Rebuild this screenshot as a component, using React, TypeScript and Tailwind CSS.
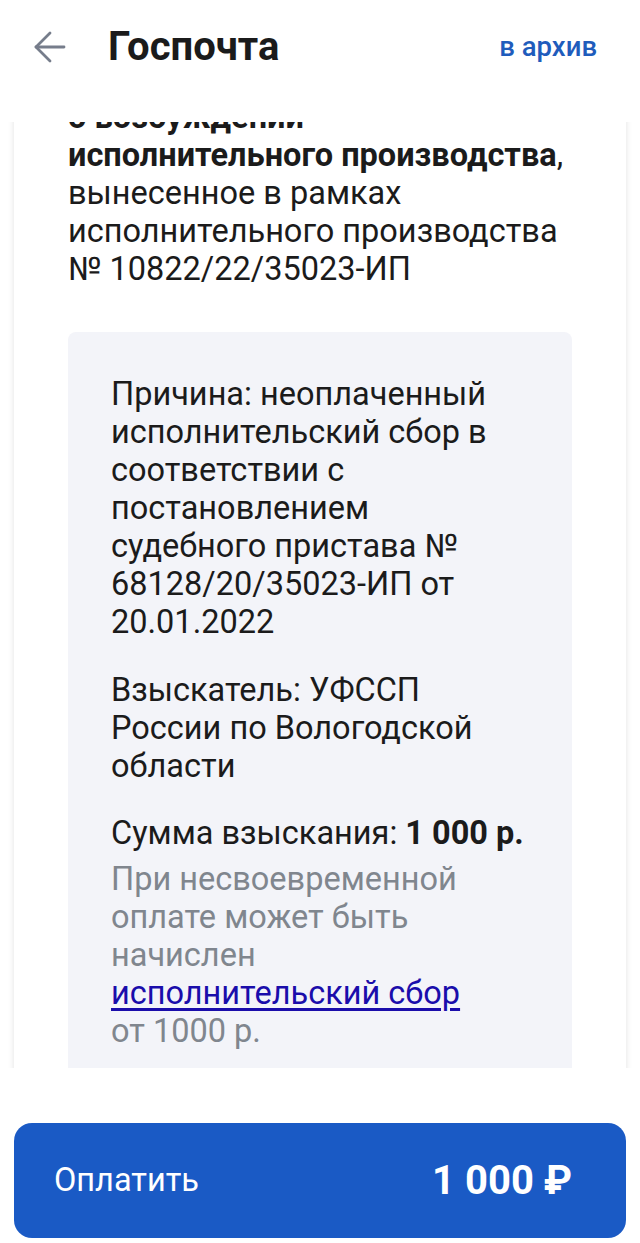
import { ArrowLeft } from 'lucide-react';

export default function App() {
  return (
    <div className="w-[640px] h-[1243px] bg-white flex flex-col overflow-hidden font-['Roboto',sans-serif] text-[#1b1b1b]">
      {/* Header */}
      <div className="h-[94px] flex items-center px-[26px] shrink-0">
        <ArrowLeft className="w-[48px] h-[48px] text-[#767d8b]" strokeWidth={1.4} />
        <h1 className="ml-[34px] text-[40px] font-bold">Госпочта</h1>
        <button className="ml-auto mr-[17px] text-[27.5px] font-medium text-[#1f5cbc]">в архив</button>
      </div>

      {/* Scroll area */}
      <div className="mt-[28px] h-[946px] overflow-hidden px-[14px] shrink-0">
        <div className="-mt-[24px] bg-white shadow-[0_0_6px_rgba(0,0,0,0.12)] px-[54px] pb-[40px]">
          <p className="text-[32.5px] leading-[38px]">
            <b>о возбуждении исполнительного производства</b>, вынесенное в рамках исполнительного производства №&nbsp;10822/22/35023-ИП
          </p>

          <div className="mt-[44px] bg-[#f3f4f9] rounded-[8px] px-[43px] pt-[43px] pb-[40px] text-[32.5px] leading-[38px]">
            <p>Причина: неоплаченный исполнительский сбор в соответствии с постановлением судебного пристава № 68128/20/35023-ИП от 20.01.2022</p>
            <p className="mt-[30px]">Взыскатель: УФССП России по Вологодской области</p>
            <p className="mt-[29px]">
              Сумма взыскания: <b>1 000 р.</b>
            </p>
            <p className="mt-[8px] text-[#80868e]">
              При несвоевременной оплате может быть начислен
              <br />
              <a className="text-[#1a0dab] underline underline-offset-[4px]">исполнительский сбор</a>
              <br />
              от 1000 р.
            </p>
          </div>
        </div>
      </div>

      {/* Pay button */}
      <div className="px-[14px] mt-[55px]">
        <button className="w-full h-[115px] rounded-[18px] bg-[#1a5ac5] flex items-center justify-between pl-[40px] pr-[54px] text-white">
          <span className="text-[32.5px]">Оплатить</span>
          <span className="text-[40px] font-bold">1 000 ₽</span>
        </button>
      </div>
    </div>
  );
}
